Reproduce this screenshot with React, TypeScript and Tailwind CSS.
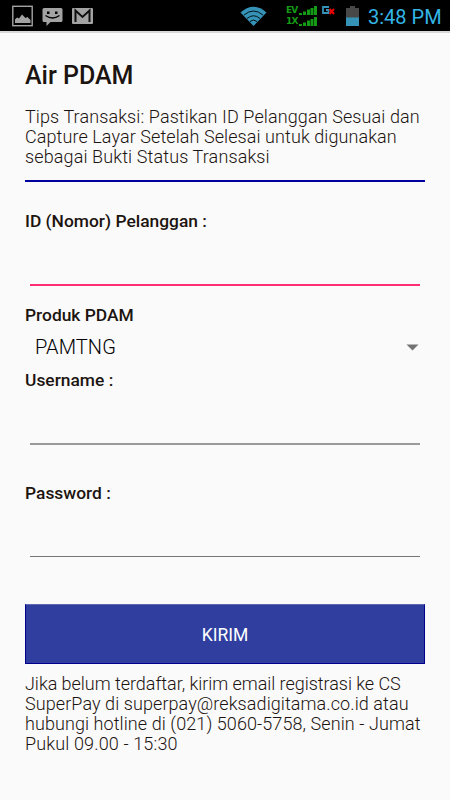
import { useState, type ReactNode } from "react"

const TIPS = [
  { text: "Tips Transaksi: Pastikan ID Pelanggan Sesuai dan", className: "tracking-[0.1px]" },
  { text: "Capture Layar Setelah Selesai untuk digunakan", className: "tracking-[0.08px]" },
  { text: "sebagai Bukti Status Transaksi", className: "tracking-[0.12px]" },
]

const HELP = [
  { text: "Jika belum terdaftar, kirim email registrasi ke CS", className: "tracking-[-0.04px]" },
  { text: "SuperPay di superpay@reksadigitama.co.id atau", className: "tracking-[0.08px]" },
  { text: "hubungi hotline di (021) 5060-5758, Senin - Jumat", className: "tracking-[0.08px]" },
  { text: "Pukul 09.00 - 15:30", className: "tracking-[0.14px]" },
]

function SignalBars() {
  return (
    <svg width="18" height="9" viewBox="0 0 18 9">
      <rect x="0" y="7" width="3" height="2" fill="#159a15" />
      <rect x="4" y="5.5" width="3" height="3.5" fill="#159a15" />
      <rect x="8" y="3.5" width="3" height="5.5" fill="#159a15" />
      <rect x="11.5" y="2" width="3" height="7" fill="#159a15" />
      <rect x="15" y="0" width="3" height="9" fill="#159a15" />
    </svg>
  )
}

function StatusBar() {
  return (
    <div className="flex h-[31px] items-center bg-black pl-3">
      {/* Notifications */}
      <svg width="21" height="22" viewBox="0 0 21 22">
        <rect x="0.8" y="1.3" width="19.4" height="19.4" fill="none" stroke="#a3a3a3" strokeWidth="1.4" />
        <path d="M3 18v-3.500l2-2 2 1 3-4 2 2 1.500 1.500 2-1 3 3v3z" fill="#a3a3a3" />
      </svg>
      <svg className="mt-[2px] ml-[9px]" width="21" height="20" viewBox="0 0 21 20">
        <path d="M2 1h17q1.500 0 1.500 1.500v11q0 1.500-1.500 1.500H8.500L4.500 19v-4H2q-1.500 0-1.500-1.500v-11Q.5 1 2 1z" fill="#a3a3a3" />
        <rect x="5" y="4.500" width="2.500" height="2.500" fill="#000" />
        <rect x="13" y="4.500" width="2.500" height="2.500" fill="#000" />
        <path d="M3.500 8.500q7 5 14 0" fill="none" stroke="#000" strokeWidth="1.300" />
      </svg>
      <svg className="ml-[9px]" width="21" height="16" viewBox="0 0 21 16">
        <rect width="21" height="16" rx="1" fill="#a3a3a3" />
        <path d="M3.500 14V2.500l7 6.500 7-6.500V14" fill="none" stroke="#111" strokeWidth="2" />
      </svg>

      {/* Wifi */}
      <svg className="ml-[147px]" width="27" height="20" viewBox="0 0 27 20">
        <path d="M0.500 6.500Q13.500-5 26.500 6.500L13.500 20z" fill="#3593b8" />
        <path d="M4 9q9.500-8 19 0M7 12.500q6.500-5.500 13 0M10 15.500q3.500-3 7 0" fill="none" stroke="#000" strokeWidth="0.900" />
      </svg>

      {/* Mobile network */}
      <div className="ml-[19px] flex flex-col gap-[2px] font-['DejaVu_Sans'] text-[9px] leading-[9px] font-bold text-[#159a15]">
        <div className="flex items-end">
          <span className="w-[13px] tracking-[-0.8px]">EV</span>
          <SignalBars />
        </div>
        <div className="flex items-end">
          <span className="w-[13px] tracking-[-0.8px]">1X</span>
          <SignalBars />
        </div>
      </div>
      <svg className="mb-[10px] ml-[5px]" width="13" height="9" viewBox="0 0 13 9">
        <path d="M7 1H1v6h5.500V4H4" fill="none" stroke="#3593b8" strokeWidth="1.800" />
        <path d="M7.500 3l4.500 5M12 3L7.500 8" stroke="#e00" strokeWidth="2" />
      </svg>

      {/* Battery and clock */}
      <svg className="ml-[11px]" width="13" height="20" viewBox="0 0 13 20">
        <path d="M0 2h4V0h5v2h4v10H0z" fill="#484848" />
        <rect y="11.500" width="13" height="8.500" fill="#3593b8" />
      </svg>
      <span className="ml-[9px] pt-[3px] text-[20px] leading-[31px] whitespace-nowrap text-[#33b5e5]">3:48 PM</span>
    </div>
  )
}

function Label({ children }: { children: ReactNode }) {
  return <span className="block h-5 text-[17.4px] leading-5 font-medium whitespace-nowrap text-[#1c1410]">{children}</span>
}

function Paragraph({ lines }: { lines: { text: string; className: string }[] }) {
  return (
    <p className="text-[18px] leading-5 font-[350] text-[#1c1410]">
      {lines.map((line) => (
        <span key={line.text} className={`block whitespace-nowrap ${line.className}`}>{line.text}</span>
      ))}
    </p>
  )
}

export default function App() {
  const [customerId, setCustomerId] = useState("")
  const [username, setUsername] = useState("")
  const [password, setPassword] = useState("")

  return (
    <div className="h-[800px] w-[450px] overflow-hidden bg-[#fafafa] font-[Roboto,sans-serif]">
      <StatusBar />
      <div className="h-[2px] bg-[#d8d8d8]" />

      <form className="flex flex-col px-[25px] pt-[27px]" onSubmit={(e) => e.preventDefault()}>
        <h1 className="h-[30px] pt-px text-[25px] leading-[30px] font-medium text-[#1c1410]">Air PDAM</h1>
        <div className="mt-[17px]">
          <Paragraph lines={TIPS} />
        </div>
        <div className="mt-[13px] h-[2px] bg-[#00009c]" />

        <div className="mt-[29px]">
          <Label>ID (Nomor) Pelanggan :</Label>
          <input
            className="mx-[5px] block h-[55px] w-[390px] border-b-2 border-[#ff2e74] outline-none"
            value={customerId}
            onChange={(e) => setCustomerId(e.target.value)}
          />
        </div>

        <div className="mt-[19px]">
          <Label>Produk PDAM</Label>
          <div className="flex h-[45px] items-center justify-between pr-[6px] pl-[10px]">
            <span className="pb-[2px] text-[20px] font-[350] tracking-[0.1px] text-black">PAMTNG</span>
            <svg width="13" height="7" viewBox="0 0 13 7">
              <path d="M0.500 0.500h12l-6 6z" fill="#737373" />
            </svg>
          </div>
        </div>

        <Label>Username :</Label>
        <input
          className="mx-[5px] block h-[55px] w-[390px] border-b-2 border-[#9a9a9a] outline-none"
          value={username}
          onChange={(e) => setUsername(e.target.value)}
        />

        <div className="mt-[38px]">
          <Label>Password :</Label>
          <input
            type="password"
            className="mx-[5px] block h-[54px] w-[390px] border-b border-[#757575] outline-none"
            value={password}
            onChange={(e) => setPassword(e.target.value)}
          />
        </div>

        <button className="mt-[47px] h-[60px] border border-[#00008c] border-t-[#5e68ae] bg-[#303f9f] pt-[2px] text-[17.5px] text-white">
          KIRIM
        </button>
        <div className="mt-[10px]">
          <Paragraph lines={HELP} />
        </div>
      </form>
    </div>
  )
}
